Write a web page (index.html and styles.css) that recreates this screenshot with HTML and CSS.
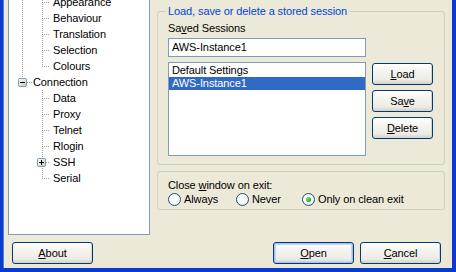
FILE: index.html
```html
<!DOCTYPE html>
<html lang="en">
<head>
    <meta charset="UTF-8">
    <title>PuTTY Configuration</title>
    <link rel="stylesheet" href="styles.css">
</head>
<body>
<div class="window">
    <div class="main">
        <div class="tree">
            <div class="node leaf-w">Appearance</div>
            <div class="node leaf-w">Behaviour</div>
            <div class="node leaf-w">Translation</div>
            <div class="node leaf-w">Selection</div>
            <div class="node leaf-w last">Colours</div>
            <div class="node conn">
                <svg class="expander" width="9" height="9" viewBox="0 0 9 9">
                    <rect x="0.5" y="0.5" width="8" height="8" rx="1" fill="url(#boxfill)" stroke="#7a98af"/>
                    <path d="M2 4.5h5" stroke="#000"/>
                    <defs>
                        <linearGradient id="boxfill" x1="0" y1="0" x2="1" y2="1">
                            <stop offset="0" stop-color="#ffffff"/>
                            <stop offset="1" stop-color="#c9c6b8"/>
                        </linearGradient>
                    </defs>
                </svg>
                Connection
            </div>
            <div class="node leaf-c">Data</div>
            <div class="node leaf-c">Proxy</div>
            <div class="node leaf-c">Telnet</div>
            <div class="node leaf-c">Rlogin</div>
            <div class="node ssh">
                <svg class="expander" width="9" height="9" viewBox="0 0 9 9">
                    <rect x="0.5" y="0.5" width="8" height="8" rx="1" fill="url(#boxfill)" stroke="#7a98af"/>
                    <path d="M2 4.5h5M4.5 2v5" stroke="#000"/>
                </svg>
                SSH
            </div>
            <div class="node leaf-c last">Serial</div>
        </div>

        <div class="panel">
            <fieldset class="group sessions">
                <legend>Load, save or delete a stored session</legend>
                <div class="label">Sa<u>v</u>ed Sessions</div>
                <div class="text-input">AWS-Instance1</div>
                <div class="session-row">
                    <div class="listbox">
                        <div class="list-item">Default Settings</div>
                        <div class="list-item selected">AWS-Instance1</div>
                    </div>
                    <div class="side-buttons">
                        <button class="btn"><u>L</u>oad</button>
                        <button class="btn">Sa<u>v</u>e</button>
                        <button class="btn"><u>D</u>elete</button>
                    </div>
                </div>
            </fieldset>

            <div class="group close-group">
                <div class="label">Close <u>w</u>indow on exit:</div>
                <div class="radios">
                    <label class="radio-item"><span class="radio"></span>Always</label>
                    <label class="radio-item"><span class="radio"></span>Never</label>
                    <label class="radio-item"><span class="radio checked"></span>Only on clean exit</label>
                </div>
            </div>
        </div>
    </div>

    <div class="footer">
        <button class="btn wide"><u>A</u>bout</button>
        <div class="footer-right">
            <button class="btn wide default"><u>O</u>pen</button>
            <button class="btn wide"><u>C</u>ancel</button>
        </div>
    </div>
</div>
</body>
</html>
```

FILE: styles.css
```css
:root {
    --face: #ece9d8;
    --frame: #0a3bd0;
    --field-border: #7f9db9;
    --group-border: #d0d0bf;
    --legend: #0046d5;
    --select: #316ac5;
    --dots: #a0a0a0;
}

* {
    margin: 0;
    padding: 0;
    box-sizing: border-box;
}

body {
    width: 456px;
    height: 272px;
    overflow: hidden;
    font-family: 'Liberation Sans', Arial, sans-serif;
    font-size: 11px;
    letter-spacing: -0.1px;
    color: #000;
    background-color: var(--frame);
}

u {
    text-decoration: underline;
    text-underline-offset: 1px;
}

.window {
    height: 272px;
    display: flex;
    flex-direction: column;
    background-color: var(--face);
    border-left: 3px solid var(--frame);
    border-right: 4px solid var(--frame);
    border-bottom: 4px solid var(--frame);
    box-shadow: inset 1px 0 0 #5a7edc;
}

.main {
    display: flex;
    height: 235px;
}

/* tree view on the left, its top is cut off */
.tree {
    margin-left: 5px;
    margin-top: -10px;
    width: 142px;
    height: 245px;
    padding-top: 3px;
    background-color: #fff;
    border: 1px solid var(--field-border);
}

.node {
    height: 16px;
    display: flex;
    align-items: center;
    white-space: nowrap;
    background-repeat: no-repeat;
}

.leaf-w {
    padding-left: 44px;
    background-image:
        repeating-linear-gradient(var(--dots) 0 1px, transparent 1px 2px),
        repeating-linear-gradient(var(--dots) 0 1px, transparent 1px 2px),
        repeating-linear-gradient(to right, var(--dots) 0 1px, transparent 1px 2px);
    background-size: 1px 16px, 1px 16px, 8px 1px;
    background-position: 13px 0, 33px 0, 33px 8px;
}

.leaf-w.last {
    background-size: 1px 16px, 1px 9px, 8px 1px;
}

.conn {
    padding-left: 9px;
    background-image:
        repeating-linear-gradient(var(--dots) 0 1px, transparent 1px 2px),
        repeating-linear-gradient(to right, var(--dots) 0 1px, transparent 1px 2px);
    background-size: 1px 5px, 5px 1px;
    background-position: 13px 0, 18px 8px;
}

.conn .expander {
    margin-right: 6px;
}

.leaf-c {
    padding-left: 44px;
    background-image:
        repeating-linear-gradient(var(--dots) 0 1px, transparent 1px 2px),
        repeating-linear-gradient(to right, var(--dots) 0 1px, transparent 1px 2px);
    background-size: 1px 16px, 8px 1px;
    background-position: 33px 0, 33px 8px;
}

.leaf-c.last {
    background-size: 1px 9px, 8px 1px;
}

.ssh {
    padding-left: 28px;
    background-image:
        repeating-linear-gradient(var(--dots) 0 1px, transparent 1px 2px),
        repeating-linear-gradient(to right, var(--dots) 0 1px, transparent 1px 2px);
    background-size: 1px 16px, 4px 1px;
    background-position: 33px 0, 37px 8px;
}

.ssh .expander {
    margin-right: 7px;
}

.expander {
    flex: none;
    display: block;
}

/* right side */
.panel {
    margin-left: 7px;
    width: 288px;
    display: flex;
    flex-direction: column;
    gap: 6px;
}

.group {
    border: 1px solid var(--group-border);
    border-radius: 3px;
}

.sessions {
    margin-top: 4px;
    padding: 3px 10px 8px 10px;
}

.sessions legend {
    color: var(--legend);
    line-height: 14px;
    padding: 0 2px;
    margin-left: -2px;
}

.label {
    line-height: 14px;
}

.text-input {
    margin-top: 3px;
    width: 198px;
    height: 19px;
    line-height: 17px;
    padding-left: 3px;
    background-color: #fff;
    border: 1px solid var(--field-border);
}

.session-row {
    margin-top: 5px;
    display: flex;
    gap: 6px;
}

.listbox {
    width: 198px;
    height: 94px;
    padding-top: 1px;
    background-color: #fff;
    border: 1px solid var(--field-border);
}

.list-item {
    height: 13px;
    line-height: 13px;
    padding-left: 3px;
}

.list-item.selected {
    background-color: var(--select);
    color: #fff;
}

.side-buttons {
    margin-top: 1px;
    display: flex;
    flex-direction: column;
    gap: 5px;
}

.btn {
    width: 61px;
    height: 22px;
    font-family: inherit;
    font-size: 11px;
    letter-spacing: inherit;
    color: #000;
    border: 1px solid #003c74;
    border-radius: 3px;
    background: linear-gradient(#ffffff, #f4f3ee 40%, #ecebe6 80%, #d6d0c5);
    box-shadow: inset -1px -1px 0 #d8d4c8;
}

.close-group {
    height: 39px;
    padding: 6px 10px 0 10px;
}

.radios {
    display: grid;
    grid-template-columns: 68px 66px auto;
    height: 14px;
    align-items: center;
}

.radio-item {
    display: flex;
    align-items: center;
    gap: 3px;
    white-space: nowrap;
}

.radio {
    width: 13px;
    height: 13px;
    border-radius: 50%;
    border: 1px solid #1c5180;
    background: radial-gradient(circle at 40% 40%, #ffffff 30%, #e2e0d4 100%);
    display: flex;
    align-items: center;
    justify-content: center;
}

.radio.checked::after {
    content: '';
    width: 5px;
    height: 5px;
    border-radius: 50%;
    background: radial-gradient(circle at 35% 35%, #7fe07f, #21a121 70%);
}

.footer {
    margin-top: 7px;
    padding: 0 11px 0 9px;
    display: flex;
    justify-content: space-between;
}

.footer-right {
    display: flex;
    gap: 6px;
}

.btn.wide {
    width: 81px;
}

.btn.default {
    box-shadow: inset 0 0 0 1px #a9c1ef, inset 0 0 0 2px #c6d6f5;
}
```
